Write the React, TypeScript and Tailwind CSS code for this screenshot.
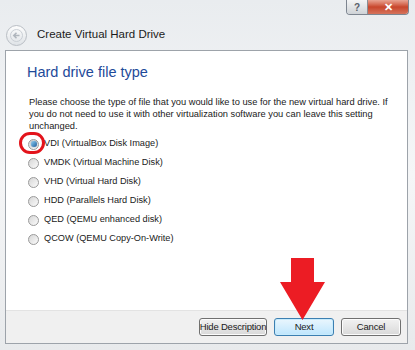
import React from "react";

const options = [
  "VDI (VirtualBox Disk Image)",
  "VMDK (Virtual Machine Disk)",
  "VHD (Virtual Hard Disk)",
  "HDD (Parallels Hard Disk)",
  "QED (QEMU enhanced disk)",
  "QCOW (QEMU Copy-On-Write)",
];

const Radio = ({ checked }: { checked?: boolean }) => (
  <span className="relative flex h-[11px] w-[11px] items-center justify-center rounded-full border border-[#9a9a9a] bg-gradient-to-br from-[#d6d6d6] to-[#fbfbfb]">
    {checked ? (
      <span className="h-[6px] w-[6px] rounded-full bg-gradient-to-br from-[#8ed0f5] to-[#1f5f9c] shadow-[0_0_1px_#0b3c6e]" />
    ) : null}
  </span>
);

const Button = ({ label, primary, w }: { label: string; primary?: boolean; w: string }) => (
  <button
    className={
      "flex h-[18px] items-center justify-center whitespace-nowrap rounded-[3px] border text-[9.5px] tracking-[-0.2px] text-[#1a1a1a] " +
      w +
      (primary
        ? " border-[#3c7fb1] bg-gradient-to-b from-[#eaf6fd] to-[#bee6fd] shadow-[inset_0_0_0_1px_#c8ebfc]"
        : " border-[#707070] bg-gradient-to-b from-[#f2f2f2] to-[#d9d9d9] shadow-[inset_0_0_0_1px_#fcfcfc]")
    }
  >
    {label}
  </button>
);

export default function App() {
  return (
    <div
      className="relative flex h-[350px] w-[415px] flex-col overflow-hidden bg-gradient-to-b from-[#e9ecef] via-[#f5f6f7] to-[#e8eaec]"
      style={{ fontFamily: "'Liberation Sans', Arial, sans-serif" }}
    >
      {/* caption buttons */}
      <div className="flex h-[20px] justify-end pr-[6px]">
        <div className="flex h-[15px] overflow-hidden rounded-b-[4px] border border-t-0 border-[#7d8590]">
          <div className="flex w-[21px] items-center justify-center border-r border-[#8a8f96] bg-gradient-to-b from-[#f4f5f6] to-[#cfd3d7] text-[10px] font-bold text-[#59606a]">
            ?
          </div>
          <div className="flex w-[40px] items-center justify-center bg-gradient-to-b from-[#e8a493] via-[#c8452b] to-[#d5735c] text-[11px] font-bold text-white">
            ✕
          </div>
        </div>
      </div>

      {/* header */}
      <div className="flex h-[30px] items-center gap-[10px] pl-[6px]">
        <div className="flex h-[21px] w-[21px] items-center justify-center rounded-full border border-[#b9bec4] bg-gradient-to-b from-[#fdfdfd] to-[#dfe3e7]">
          <svg width="13" height="13" viewBox="0 0 13 13">
            <circle cx="6.5" cy="6.5" r="6" fill="none" stroke="#c9ced4" strokeWidth="1" />
            <path d="M9.5 6.5H4M6.5 3.8 3.8 6.5l2.7 2.7" fill="none" stroke="#b0b6bd" strokeWidth="1.6" />
          </svg>
        </div>
        <span className="text-[11.5px] text-[#1b1b1b]">Create Virtual Hard Drive</span>
      </div>

      {/* content panel */}
      <div className="ml-[5px] mr-[7px] mb-[6px] flex flex-1 flex-col border border-[#9da3aa] bg-white">
        <div className="flex flex-1 flex-col pl-[21px] pr-[8px] pt-[11px]">
          <h1 className="text-[14.5px] text-[#1e4a99]">Hard drive file type</h1>
          <p className="mt-[12px] pl-[2px] text-[9.3px] leading-[12px] text-[#1a1a1a]">
            Please choose the type of file that you would like to use for the new virtual hard drive. If
            you do not need to use it with other virtualization software you can leave this setting
            unchanged.
          </p>
          <div className="mt-[7px] flex flex-col gap-[8px] pl-[1px]">
            {options.map((o, i) => (
              <label key={o} className="flex h-[11px] items-center gap-[5px] text-[9.2px] text-[#1a1a1a]">
                <Radio checked={i === 0} />
                <span>{o}</span>
              </label>
            ))}
          </div>
        </div>
        <div className="flex h-[33px] items-center justify-end gap-[7px] border-t border-[#e3e3e3] bg-[#f0f0f0] pr-[6px]">
          <Button label="Hide Description" w="w-[68px]" />
          <Button label="Next" primary w="w-[60px]" />
          <Button label="Cancel" w="w-[60px]" />
        </div>
      </div>

      {/* annotations */}
      <div className="absolute left-[19px] top-[132px] h-[22px] w-[26px] rounded-full border-[3px] border-[#e3131b]" />
      <svg className="absolute left-[278px] top-[258px]" width="50" height="64" viewBox="0 0 50 64">
        <path d="M13 0H36V24H47L24.5 62L2 24H13Z" fill="#ec1c24" />
      </svg>
    </div>
  );
}
